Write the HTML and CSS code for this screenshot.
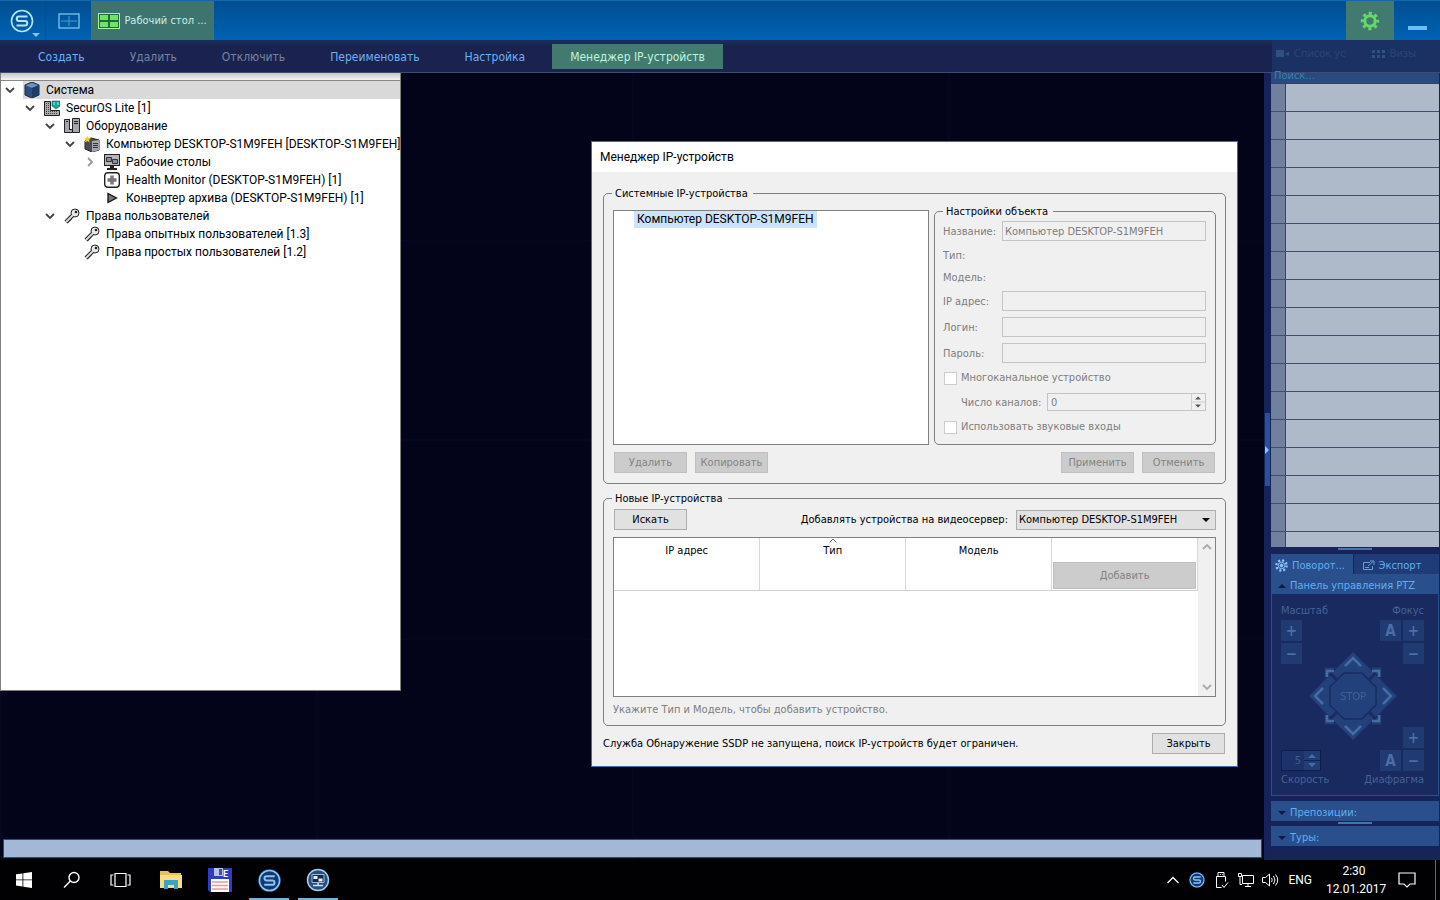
FILE: index.html
```html
<!DOCTYPE html>
<html lang="ru">
<head>
	<meta charset="utf-8">
	<title>SecurOS Lite</title>
	<link rel="stylesheet" href="styles.css">
</head>
<body>
	<!-- shared shapes -->
	<svg class="sprite" width="0" height="0">
		<symbol id="logo" viewBox="0 0 24 24">
			<circle cx="12" cy="12" r="10.5" fill="none" stroke="currentColor" stroke-width="1.6"/>
			<path d="M17.5 7.5H9a2.2 2.2 0 0 0 0 4.5h6a2.2 2.2 0 0 1 0 4.5H6.5" fill="none" stroke="currentColor" stroke-width="2"/>
		</symbol>
		<symbol id="key" viewBox="0 0 16 16">
			<path d="M2 14L9 7" stroke="#222" stroke-width="4"/>
			<path d="M3 12l2 2M5 10l2 2" stroke="#222" stroke-width="2"/>
			<circle cx="11" cy="5" r="4" fill="#e8e8e8" stroke="#222"/>
			<path d="M2 14L9 7" stroke="#ddd" stroke-width="2"/>
			<circle cx="12" cy="4" r="1.3" fill="#222"/>
		</symbol>
		<symbol id="down" viewBox="0 0 10 10">
			<path d="M1 3l4 4 4-4" fill="none" stroke="currentColor" stroke-width="1.8"/>
		</symbol>
	</svg>

	<header class="topbar">
		<button class="top_btn logo_btn" aria-label="SecurOS">
			<svg width="24" height="24"><use href="#logo"/></svg>
			<svg class="logo_arrow" width="8" height="4" viewBox="0 0 8 4"><path d="M0 0h8L4 4z" fill="#7cc4f4"/></svg>
		</button>
		<button class="top_btn grid_btn" aria-label="Рабочие столы">
			<svg width="22" height="16" viewBox="0 0 22 16" fill="none"><rect x="1" y="1" width="20" height="14" stroke="#7fc3ee" stroke-width="1.3"/><path d="M11 3v10M3 8h16" stroke="#4b9bd6"/></svg>
		</button>
		<button class="top_btn desk_btn">
			<svg width="22" height="16" viewBox="0 0 22 16"><rect x=".5" y=".5" width="21" height="15" fill="#1f6e3a" stroke="#a5f5a0"/><path d="M2 2h8v5H2zM12 2h8v5h-8zM2 9h8v5H2zM12 9h8v5h-8z" fill="#71e368"/></svg>
			<span>Рабочий стол ...</span>
		</button>
		<button class="top_btn gear_btn" aria-label="Настройки">
			<svg width="20" height="20" viewBox="-10 -10 20 20" fill="none" stroke="#66d868"><circle r="5.2" stroke-width="3"/><circle r="7.7" stroke-width="3" stroke-dasharray="3.024" stroke-dashoffset="1.5"/></svg>
		</button>
		<button class="top_btn min_btn" aria-label="Свернуть"><i></i></button>
	</header>

	<nav class="menu">
		<a href="#">Создать</a>
		<a href="#" class="off">Удалить</a>
		<a href="#" class="off">Отключить</a>
		<a href="#">Переименовать</a>
		<a href="#">Настройка</a>
		<a href="#" class="active">Менеджер IP-устройств</a>
		<div class="menu_ghost">
			<svg width="14" height="8" viewBox="0 0 14 8" fill="#2d5187"><path d="M0 0h8v7H0zM9 4l4-2v4z"/></svg>
			<span>Список ус</span>
			<svg width="14" height="8" viewBox="0 0 14 8" fill="#2d5187"><path d="M0 0h3v3H0zM5 0h3v3H5zM10 0h3v3h-3zM0 5h3v3H0zM5 5h3v3H5zM10 5h3v3h-3z"/></svg>
			<span>Визы</span>
		</div>
	</nav>

	<main class="workspace">
		<div class="stage">
			<section class="tree">
				<ul>
					<li class="lv0 selected"><svg class="exp"><use href="#down"/></svg>
						<span><svg class="ico" viewBox="0 0 16 16"><path d="M8 0l7 3v10l-7 3-7-3V3z" fill="#2c4f80" stroke="#16243c"/><path d="M8 .8L14.500 3.300 8 6 1.500 3.300z" fill="#6b92c4"/><path d="M8 6v9.500l6.500-2.800V3.300z" fill="#1f3b66"/></svg>Система</span></li>
					<li class="lv1"><svg class="exp"><use href="#down"/></svg>
						<svg class="ico" viewBox="0 0 16 16"><path d="M.5 1.500h6v9h9v5H.5z" fill="#aaa" stroke="#222"/><path d="M2 3.500h3M2 5.500h3M2 7.500h3M2 9.500h3M2 11.500h12M2 13.500h12" stroke="#444" stroke-dasharray="1 1"/><path d="M8 1h8v5l-4 3-4-3z" fill="#17a89a" stroke="#222" stroke-width=".5"/><path d="M10 2v3M14 2v3" stroke="#8ff"/></svg>SecurOS Lite [1]</li>
					<li class="lv2"><svg class="exp"><use href="#down"/></svg>
						<svg class="ico" viewBox="0 0 16 16"><path d="M.5 1.500h5v10h3v-11h7v14H.5z" fill="#a5a5ad" stroke="#222"/><path d="M5.500 1v11M8.500 1v14M2 3.500h2M10 3.500h4M10 5.500h4" stroke="#222"/></svg>Оборудование</li>
					<li class="lv3"><svg class="exp"><use href="#down"/></svg>
						<svg class="ico" viewBox="0 0 16 16"><path d="M1 5l6-3 8 2v10l-7 2-7-3z" fill="#4b4b55" stroke="#222"/><path d="M8 5l7-1v10l-7 2z" fill="#a5a5ad"/><path d="M9 7.500h5M9 9.500h5M9 11.500h5" stroke="#333"/><path d="M3.500 0l1 2 2.500.2-2 1.800.7 2.500-2.200-1.500L1 6.500 1.700 4 0 2.200 2.500 2z" fill="#f0d020"/></svg>Компьютер DESKTOP-S1M9FEH [DESKTOP-S1M9FEH]</li>
					<li class="lv4"><svg class="exp shut"><use href="#down"/></svg>
						<svg class="ico" viewBox="0 0 16 16"><rect x=".5" y=".5" width="15" height="11" fill="#b4b4bc" stroke="#222"/><path d="M2.500 3.500h5v4h-5zM8.500 5.500h5v4h-5z" fill="#8a8ea0" stroke="#333"/><path d="M6 12h4v2h3v2H3v-2h3z" fill="#222"/></svg>Рабочие столы</li>
					<li class="lv4"><i class="exp"></i>
						<svg class="ico" viewBox="0 0 16 16"><rect x=".7" y=".7" width="14.600" height="14.600" rx="3" fill="#fff" stroke="#222" stroke-width="1.4"/><path d="M6.300 3.500h3.400v2.800h2.800v3.400H9.700v2.800H6.300V9.700H3.500V6.300h2.800z" fill="#777"/></svg>Health Monitor (DESKTOP-S1M9FEH) [1]</li>
					<li class="lv4"><i class="exp"></i>
						<svg class="ico" viewBox="0 0 16 16"><path d="M4 3.500l8.500 4.500L4 12.500z" fill="#777" stroke="#111" stroke-width="1.3"/></svg>Конвертер архива (DESKTOP-S1M9FEH) [1]</li>
					<li class="lv2"><svg class="exp"><use href="#down"/></svg><svg class="ico"><use href="#key"/></svg>Права пользователей</li>
					<li class="lv3"><i class="exp"></i><svg class="ico"><use href="#key"/></svg>Права опытных пользователей [1.3]</li>
					<li class="lv3"><i class="exp"></i><svg class="ico"><use href="#key"/></svg>Права простых пользователей [1.2]</li>
				</ul>
			</section>
			<div class="stage_bar"></div>
		</div>

		<div class="grip"><svg width="4" height="8" viewBox="0 0 4 8"><path d="M0 0l4 4-4 4z" fill="#8cc8fa"/></svg></div>

		<aside class="side">
			<div class="search">Поиск...</div>
			<ul class="cams">
				<li></li><li></li><li></li><li></li><li></li><li></li><li></li><li></li><li></li>
				<li></li><li></li><li></li><li></li><li></li><li></li><li></li><li></li>
			</ul>
			<div class="split"></div>
			<div class="tabs">
				<button class="tab on"><svg width="13" height="13" viewBox="-7 -7 14 14" fill="none" stroke="#8cc6ff"><circle r="5.5" stroke-width="2.5" stroke-dasharray="2.16"/><circle r="3.5"/><circle r="1.5" fill="#8cc6ff"/></svg>Поворот...</button>
				<button class="tab"><svg width="13" height="11" viewBox="0 0 13 11" fill="none" stroke="#6d9cd0"><path d="M8 2.500H1.500v7h9V6M3 7.500h4M6 6l5-4.500M8 1h4v4"/></svg>Экспорт</button>
			</div>
			<button class="fold"><i class="tri up"></i>Панель управления PTZ</button>
			<div class="ptz">
				<div class="ptz_box">
					<span>Масштаб</span>
					<button>+</button>
					<button>−</button>
				</div>
				<div class="ptz_box right">
					<span>Фокус</span>
					<div><button>A</button><button>+</button></div>
					<button>−</button>
				</div>
				<svg class="dial" width="90" height="90" viewBox="-45 -45 90 90">
					<g fill="#22407a" stroke="#192b60" stroke-width="1.5">
						<path d="M-29-29h58v58h-58z"/>
						<path d="M0-45l22 22-11 11h-22l-11-11zM0 45l22-22-11-11h-22l-11 11zM-45 0l22-22 11 11v22l-11 11zM45 0l-22-22-11 11v22l11 11z"/>
						<path d="M-9-23H9L23-9V9L9 23H-9L-23 9V-9z"/>
					</g>
					<g fill="none" stroke="#466ba5" stroke-width="2.5">
						<path d="M-8-30l8-8 8 8M-8 30l8 8 8-8M-30-8l-8 8 8 8M30-8l8 8-8 8"/>
						<path d="M-26-19v-6h7M26-19v-6h-7M-26 19v6h7M26 19v6h-7"/>
					</g>
					<text x="0" y="4" text-anchor="middle">STOP</text>
				</svg>
				<div class="ptz_box low">
					<div class="speed"><input type="text" id="speed" value="5" disabled>
						<svg width="16" height="19" viewBox="0 0 16 19"><path d="M0 0h16v19H0z" fill="#213d75"/><path d="M0 9.500h16" stroke="#14224f"/><path d="M4 7h8L8 3zM4 12h8l-4 4z" fill="#466ba5"/></svg></div>
					<label for="speed">Скорость</label>
				</div>
				<div class="ptz_box right low">
					<button>+</button>
					<div><button>A</button><button>−</button></div>
					<span>Диафрагма</span>
				</div>
			</div>
			<button class="fold"><i class="tri"></i>Препозиции:</button>
			<div class="split short"></div>
			<button class="fold"><i class="tri"></i>Туры:</button>
		</aside>

		<section class="dialog" role="dialog" aria-labelledby="dlg_title">
			<h1 id="dlg_title">Менеджер IP-устройств</h1>
			<div class="dlg_body">
				<fieldset class="group">
					<legend>Системные IP-устройства</legend>
					<div class="columns">
						<ul class="devices"><li><a href="#">Компьютер DESKTOP-S1M9FEH</a></li></ul>
						<fieldset class="props">
							<legend>Настройки объекта</legend>
							<div class="form">
								<label for="f_name">Название:</label><input class="field" type="text" id="f_name" value="Компьютер DESKTOP-S1M9FEH" disabled>
								<span class="wide">Тип:</span>
								<span class="wide">Модель:</span>
								<label for="f_ip">IP адрес:</label><input class="field" type="text" id="f_ip" disabled>
								<label for="f_login">Логин:</label><input class="field" type="text" id="f_login" disabled>
								<label for="f_pass">Пароль:</label><input class="field" type="password" id="f_pass" disabled>
								<label class="wide check"><input type="checkbox" disabled>Многоканальное устройство</label>
								<div class="wide channels">
									<label for="f_num">Число каналов:</label>
									<div class="spin"><input type="text" id="f_num" value="0" disabled>
										<svg width="14" height="16" viewBox="0 0 14 16"><path d="M.5 0v16M0 8h14" stroke="#d0d0d0"/><path d="M4 5.500h6L7 2.500zM4 10.500h6l-3 3z" fill="#555"/></svg></div>
								</div>
								<label class="wide check last"><input type="checkbox" disabled>Использовать звуковые входы</label>
							</div>
						</fieldset>
					</div>
					<div class="buttons">
						<button class="btn" disabled>Удалить</button>
						<button class="btn" disabled>Копировать</button>
						<button class="btn push" disabled>Применить</button>
						<button class="btn" disabled>Отменить</button>
					</div>
				</fieldset>

				<fieldset class="group found">
					<legend>Новые IP-устройства</legend>
					<div class="buttons">
						<button class="btn">Искать</button>
						<label class="push" for="server">Добавлять устройства на видеосервер:</label>
						<select id="server"><option>Компьютер DESKTOP-S1M9FEH</option></select>
					</div>
					<div class="frame">
						<table>
							<thead>
								<tr><th>IP адрес</th><th><svg class="sort" width="8" height="5" viewBox="0 0 8 5"><path d="M.5 4.500L4 1l3.500 3.500" fill="none" stroke="#666"/></svg>Тип</th><th>Модель</th><th></th></tr>
							</thead>
							<tbody>
								<tr><td></td><td></td><td></td><td><button class="btn add" disabled>Добавить</button></td></tr>
							</tbody>
						</table>
						<div class="scroll"><svg class="flip"><use href="#down"/></svg><svg><use href="#down"/></svg></div>
					</div>
					<p class="hint">Укажите Тип и Модель, чтобы добавить устройство.</p>
				</fieldset>

				<div class="footer">
					<span>Служба Обнаружение SSDP не запущена, поиск IP-устройств будет ограничен.</span>
					<button class="btn">Закрыть</button>
				</div>
			</div>
		</section>
	</main>

	<footer class="taskbar">
		<button class="task" aria-label="Пуск"><svg width="16" height="16" viewBox="0 0 16 16" fill="#fff"><path d="M0 2.300l6.500-.9v6.100H0zM7.300 1.300L16 0v7.500H7.300zM0 8.300h6.500v6.200L0 13.600zM7.300 8.300H16V16l-8.700-1.300z"/></svg></button>
		<button class="task" aria-label="Поиск"><svg width="18" height="18" viewBox="0 0 18 18" fill="none" stroke="#fff" stroke-width="1.4"><circle cx="11" cy="6.5" r="5"/><path d="M7.400 10L1 16.500"/></svg></button>
		<button class="task" aria-label="Представление задач"><svg width="21" height="16" viewBox="0 0 21 16" fill="none" stroke="#fff" stroke-width="1.2"><path d="M5 1.500h11v13H5zM3.500 3H1v10h2.500M17.500 3H20v10h-2.500"/></svg></button>
		<button class="task far" aria-label="Проводник"><svg width="22" height="20" viewBox="0 0 22 20"><path d="M0 1h8l2 2h11v15H0z" fill="#e9c15c"/><path d="M0 5h22v13H0z" fill="#fbdc83"/><path d="M4 19v-9h14v9h-4v-4H8v4z" fill="#3fa3bf"/></svg></button>
		<button class="task" aria-label="Total Commander"><svg width="24" height="24" viewBox="0 0 24 24"><path d="M0 0h24v24H2l-2-2z" fill="#2a3fc4"/><path d="M6 0h9v8H6z" fill="#b9c3dc"/><path d="M11 1h3v6h-3z" fill="#3d53a8"/><path d="M3 11h18v13H3z" fill="#fff"/><path d="M4 14h16M4 17.500h16M4 21h16" stroke="#e89a92" stroke-width="1.6"/><text class="disk" x="15" y="9">E</text></svg></button>
		<button class="task run" aria-label="SecurOS"><svg class="glow" width="23" height="23"><use href="#logo"/></svg></button>
		<button class="task run" aria-label="SecurOS Монитор"><svg width="24" height="24" viewBox="0 0 24 24"><circle cx="12" cy="12" r="10.5" fill="#2b4f7c" stroke="#a8cdec" stroke-width="1.5"/><path d="M6 6.500h12v8H6z" fill="#16294a" stroke="#9dbcd9"/><path d="M7.500 8h4v3h-4zM12.500 10.500h4v3h-4z" fill="#e6f0fa"/><path d="M12 15v2M7 17.500h10" stroke="#c8def2" stroke-width="1.5"/></svg></button>

		<div class="tray">
			<svg width="16" height="16" viewBox="0 0 16 16" fill="none" stroke="#fff" stroke-width="1.3"><path d="M2.500 11L8 5.500l5.500 5.500"/></svg>
			<svg class="glow" width="16" height="16"><use href="#logo"/></svg>
			<svg width="16" height="18" viewBox="0 0 16 18" fill="none" stroke="#fff"><path d="M5 5.500v-4h6v4M3.500 5.500h9v5M3.500 5.500v11h5M9 14l2 2.500 4-5M7 3.500h.8M9 3.500h.8"/></svg>
			<svg width="17" height="16" viewBox="0 0 17 16" fill="none" stroke="#fff"><path d="M5.500 3.500h11v8h-11zM8 14.500h6M11 12v2M1.500 1.500h3v3h-3zM3 5v7.500h2"/></svg>
			<svg width="17" height="16" viewBox="0 0 17 16" fill="none" stroke="#fff"><path d="M.5 5.500h3L7.500 2v12L3.500 10.500h-3zM9.500 6q1.500 2 0 4M11.500 4q3 4 0 8M13.500 2.500q4.500 5.500 0 11"/></svg>
			<span class="lang">ENG</span>
			<time class="clock">2:30<br>12.01.2017</time>
			<svg width="18" height="18" viewBox="0 0 18 18" fill="none" stroke="#fff" stroke-width="1.2"><path d="M1 2h16v11h-5l-3 3-3-3H1z"/></svg>
			<i class="peek"></i>
		</div>
	</footer>
</body>
</html>
```

FILE: styles.css
```css
* { box-sizing: border-box; }
body {
	margin: 0;
	min-height: 100vh;
	display: flex;
	flex-direction: column;
	background: #03041a;
	font-family: "DejaVu Sans Condensed", "Noto Sans", sans-serif;
	font-size: 11px;
	line-height: 14px;
	color: #000;
}
ul { list-style: none; margin: 0; padding: 0; }
a { text-decoration: none; color: inherit; }
button, input, select { font: inherit; color: inherit; margin: 0; padding: 0; }
.sprite { display: none; }

/* top bar */
.topbar {
	display: flex;
	height: 40px;
	border-top: 1px solid #1466ae;
	background: linear-gradient(#004f90, #0062b4);
}
.top_btn {
	display: flex;
	align-items: center;
	justify-content: center;
	border: 0;
	background: none;
	color: #b5e6fb;
}
.logo_btn {
	width: 46px;
	position: relative;
	padding-right: 2px;
	border-right: 1px solid #004c8d;
}
.logo_arrow { position: absolute; right: 5px; bottom: 3px; }
.grid_btn { width: 45px; }
.desk_btn {
	gap: 4px;
	width: 123px;
	background: #3d7470;
	color: #c9efe8;
}
.gear_btn { width: 48px; margin-left: auto; background: #427a72; }
.min_btn { width: 46px; }
.min_btn i { width: 19px; height: 4px; margin-top: 14px; background: #6cbcf8; }

/* menu */
.menu {
	display: flex;
	align-items: center;
	gap: 9px;
	height: 33px;
	padding-left: 20px;
	border-bottom: 1px solid #3c4d70;
	background: linear-gradient(#17305e, #1a2350 20%);
	color: #6cb2f4;
	font-size: 12px;
}
.menu a { padding: 2px 18px 0; line-height: 23px; }
.menu .off { color: #76839f; }
.menu .active { background: #427a70; color: #bff5dc; }
.menu_ghost {
	display: flex;
	align-items: center;
	align-self: stretch;
	gap: 4px;
	width: 168px;
	margin-left: auto;
	padding: 0 24px 5px 4px;
	background: #1c3163;
	color: #27457b;
	font-size: 11px;
}
.menu_ghost span + svg { margin-left: auto; }

/* workspace */
.workspace { flex: 1; display: flex; position: relative; min-height: 0; }
.stage {
	flex: 1;
	display: flex;
	flex-direction: column;
	justify-content: space-between;
	background:
		linear-gradient(90deg, #050720 2px, transparent 2px) 0 0 / 25% 100%,
		linear-gradient(#050720 2px, transparent 2px) 0 -32px / 100% 199px,
		#03041a;
}
.tree {
	width: 401px;
	height: 618px;
	padding-top: 8px;
	border: 1px solid #808080;
	border-top: 0;
	background: linear-gradient(#c4c4c4, #f5f5f5 7px, #888 7px, #888 8px, #fff 8px);
	font-family: Roboto, "Noto Sans", sans-serif;
	font-size: 12px;
}
.tree li { display: flex; align-items: center; height: 18px; white-space: nowrap; }
.tree .lv1 { padding-left: 20px; }
.tree .lv2 { padding-left: 40px; }
.tree .lv3 { padding-left: 60px; }
.tree .lv4 { padding-left: 80px; }
.exp { flex: none; width: 10px; height: 10px; margin: 0 8px 0 4px; color: #444; }
.shut { transform: rotate(-90deg); color: #999; }
.ico { width: 16px; height: 16px; margin: 0 6px 0 1px; flex: none; }
.selected span {
	display: flex;
	flex: 1;
	align-items: center;
	height: 18px;
	background: #d9d9d9;
}
.stage_bar {
	height: 19px;
	margin: 0 2px 2px 3px;
	border: 1px solid #2c4a86;
	background: #a3b8d6;
}
.grip {
	display: flex;
	align-items: center;
	width: 7px;
	padding: 0 1px 34px;
	background: linear-gradient(#2a5196, #2a5196) 1px 340px / 5px 73px no-repeat #16235a;
}

/* right side */
.side {
	display: flex;
	flex-direction: column;
	width: 169px;
	padding: 0 1px 14px 0;
	background: #16245a;
	color: #62aef2;
}
.search {
	height: 10px;
	padding-left: 3px;
	background: #284a80;
	color: #3f7fae;
	line-height: 5px;
}
.cams { flex: 1 1 0; min-height: 0; overflow: hidden; border-top: 1px solid #33426a; }
.cams li {
	height: 28px;
	border-bottom: 1px solid #3f4e70;
	background: linear-gradient(90deg, #71809e 14px, #33426a 14px, #33426a 15px, #aeb9ca 15px);
}
.split {
	height: 7px;
	background: linear-gradient(#4673ac, #4673ac) center 1px / 34px 2px no-repeat;
}
.tabs { display: flex; height: 20px; }
.tab {
	display: flex;
	flex: 1;
	align-items: center;
	gap: 4px;
	padding: 3px 4px 0;
	border: 0;
	background: #1f3c78;
	color: #62aef2;
}
.tab + .tab { padding-left: 8px; border-left: 1px solid #16245a; }
.tab.on { background: #29508c; }
.fold {
	display: flex;
	align-items: center;
	gap: 4px;
	height: 20px;
	padding: 3px 7px 0;
	border: 0;
	background: #29508c;
	color: #62aef2;
}
.tri {
	border: 4px solid transparent;
	border-top-color: #0d1b44;
	border-bottom: 0;
}
.tri.up { border-top: 0; border-bottom: 4px solid #0d1b44; }
.ptz {
	display: grid;
	grid-template: 1fr 1fr / 1fr 1fr;
	height: 202px;
	margin-bottom: 5px;
	padding: 10px 14px 8px 9px;
	border: 1px solid #29508c;
	border-top: 0;
	background: #192a60;
	color: #456294;
}
.ptz_box { grid-area: 1 / 1; display: flex; flex-direction: column; align-items: flex-start; gap: 2px; }
.ptz_box div { display: flex; gap: 2px; }
.ptz_box.right { grid-area: 1 / 2; align-items: flex-end; }
.ptz_box.low { grid-area: 2 / 1; align-self: end; }
.ptz_box.right.low { grid-area: 2 / 2; }
.ptz_box button {
	width: 21px;
	height: 21px;
	border: 0;
	background: #203a72;
	color: #4a6ea5;
	font-size: 15px;
	font-weight: bold;
}
.dial { grid-area: 1 / 1 / 3 / 3; place-self: center; }
.dial text { font-size: 11px; fill: #3f6096; }
.ptz_box .speed { gap: 0; width: 40px; height: 21px; border: 1px solid #101d48; }
.speed input { width: 22px; padding-right: 3px; border: 0; background: #1c3268; color: #3d5b90; text-align: right; }
.split.short { height: 5px; }

/* dialog window */
.dialog {
	position: absolute;
	left: 591px;
	top: 68px;
	width: 647px;
	border: 1px solid #3d6ea8;
	background: #f0f0f0;
}
.dialog h1 {
	margin: 0;
	padding: 0 8px;
	background: #fff;
	font-family: Roboto, "Noto Sans", sans-serif;
	font-size: 12px;
	font-weight: normal;
	line-height: 30px;
}
.dlg_body { padding: 14px 11px 12px; }
fieldset { min-width: 0; margin: 0; border: 1px solid #808080; border-radius: 5px; }
legend { padding: 1px 5px 0 3px; line-height: 13px; }
.group { padding: 4px 9px 10px; }
.group > legend { margin-left: -1px; }
.columns { display: flex; gap: 5px; }
.devices {
	flex: 1;
	margin-top: 6px;
	border: 1px solid #808080;
	background: #fff;
	font-family: Roboto, "Noto Sans", sans-serif;
	font-size: 12px;
}
.devices a {
	display: inline-block;
	margin-left: 20px;
	padding: 0 3px;
	line-height: 17px;
	background: #cce4fb;
}
.props { width: 282px; padding: 3px 9px 7px 8px; }
.form {
	display: grid;
	grid-template-columns: 59px 1fr;
	align-items: center;
	gap: 6px 0;
	color: #7d7d7d;
}
.form label { padding-top: 2px; }
.wide { grid-column: 1 / 3; }
.form span { padding-top: 2px; }
.field {
	width: 100%;
	height: 20px;
	padding: 1px 2px 0;
	border: 1px solid #c4c4c4;
	background: #f0f0f0;
}
.form .check { display: flex; align-items: center; gap: 4px; height: 18px; padding-top: 0; }
.form .last { height: 20px; }
.check input {
	appearance: none;
	width: 13px;
	height: 13px;
	margin-left: 1px;
	border: 1px solid #ccc;
	background: #fff;
}
.channels { display: flex; align-items: center; justify-content: space-between; height: 18px; padding-left: 18px; }
.spin {
	display: flex;
	align-items: center;
	width: 159px;
	height: 18px;
	border: 1px solid #c4c4c4;
}
.spin input { flex: 1; min-width: 0; padding: 1px 3px 0; border: 0; background: none; }
.buttons { display: flex; align-items: center; gap: 8px; padding: 0 1px; }
.columns + .buttons { margin-top: 7px; }
.push { margin-left: auto; }
.btn {
	width: 73px;
	height: 21px;
	padding-top: 1px;
	border: 1px solid #adadad;
	background: #e1e1e1;
}
.btn:disabled { border-color: #bfbfbf; background: #ccc; color: #838383; }
.found { margin-top: 7px; padding: 4px 9px 9px; }
.found .buttons { padding-right: 0; }
select {
	appearance: none;
	width: 200px;
	height: 20px;
	padding: 1px 2px 0;
	border: 1px solid #adadad;
	border-radius: 0;
	background: url("data:image/svg+xml,%3Csvg xmlns='http://www.w3.org/2000/svg' width='8' height='4'%3E%3Cpath d='M0 0h8L4 4z'/%3E%3C/svg%3E") right 5px center no-repeat #e1e1e1;
}
.frame {
	display: flex;
	height: 160px;
	margin-top: 7px;
	border: 1px solid #808080;
	background: #fff;
}
table { flex: 1; width: 100%; align-self: flex-start; table-layout: fixed; border-collapse: collapse; }
th { position: relative; width: 25%; height: 23px; padding: 2px 0 0; font-weight: normal; }
th, td { border-right: 1px solid #d8d8d8; }
td { height: 29px; padding: 1px; border-bottom: 1px solid #d0d0d0; }
.sort { position: absolute; left: 0; right: 0; top: 0; margin: 0 auto; }
.btn.add { display: block; width: 100%; height: 27px; }
.scroll {
	display: flex;
	flex-direction: column;
	justify-content: space-between;
	align-items: center;
	width: 17px;
	padding: 4px 0;
	background: #f0f0f0;
	color: #aaa;
}
.scroll svg { width: 10px; height: 10px; }
.flip { transform: scaleY(-1); }
.hint { margin: 6px 0 0; color: #7d7d7d; }
.found .hint { margin-bottom: -1px; }
.footer {
	display: flex;
	align-items: center;
	justify-content: space-between;
	margin-top: 7px;
	padding-right: 1px;
}

/* taskbar */
.taskbar {
	display: flex;
	height: 40px;
	background: #010103;
	color: #fff;
	font-family: Roboto, "Noto Sans", sans-serif;
	font-size: 12px;
}
.task {
	display: flex;
	align-items: center;
	justify-content: center;
	width: 48px;
	border: 0;
	background: none;
}
.task.far { margin-left: 3px; }
.far ~ .task { margin-left: 1px; }
.run { background: linear-gradient(#76b4de, #76b4de) bottom / 40px 2px no-repeat; }
.glow { color: #8cc4f5; background: #123a70; border-radius: 50%; }
.disk { font-size: 9px; font-weight: bold; fill: #fff; }
.tray { display: flex; align-items: center; gap: 8px; margin-left: auto; }
.lang { margin: 0 6px 0 1px; }
.clock { width: 56px; line-height: 18px; text-align: center; white-space: nowrap; }
.clock + svg { margin-left: 8px; }
.peek { align-self: stretch; width: 5px; margin-left: 11px; border-left: 1px solid #666; }
```
